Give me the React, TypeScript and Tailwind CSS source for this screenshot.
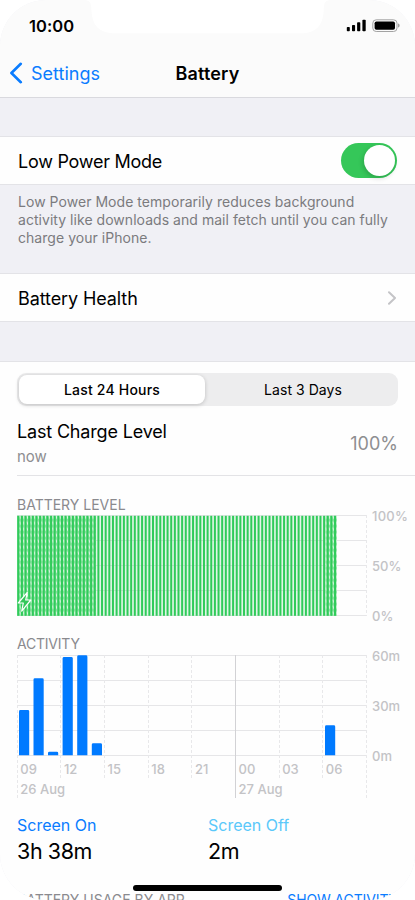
import React from "react"

const GRID_LINES = [0.5, 25.5, 50.5, 75.5, 100.5]
const SLOT = 349.5 / 96
const BATTERY_BARS = Array.from({ length: 88 }, (_, i) => i)

const ACTIVITY = [
  { x: 2, top: 55 },
  { x: 16.5, top: 23.3 },
  { x: 31, top: 96.7 },
  { x: 45.6, top: 2 },
  { x: 60.2, top: 0.3 },
  { x: 74.8, top: 88.3 },
  { x: 308, top: 70.3 },
]

const HOURS = ["09", "12", "15", "18", "21", "00", "03", "06"]

const StatusBar: React.FC = () => (
  <div className="relative flex h-[49px] items-start justify-between pt-[17px] pr-[15px] pl-[29px]">
    <svg
      className="absolute top-0 left-0"
      width="415"
      height="49"
      viewBox="0 0 415 49"
    >
      <path
        d="M84 0C89 0 91 2 91.3 8C91.8 25 98 33.3 116 33.3H300C317 33.3 323.6 25 323.8 8C324 2 326 0 331 0Z"
        fill="#fff"
      />
    </svg>
    <span className="text-[16.5px] leading-[18px] font-semibold tracking-[0.05px]">
      10:00
    </span>
    <svg
      className="mt-[2px]"
      width="54"
      height="14"
      viewBox="346 19 54 14"
    >
      <rect x="346.8" y="27" width="3" height="4.3" rx="0.8" />
      <rect x="352" y="25" width="3.1" height="6.3" rx="0.8" />
      <rect x="357.1" y="22.3" width="3.2" height="9" rx="0.8" />
      <rect x="362.4" y="19.7" width="3.3" height="11.6" rx="0.8" />
      <rect
        x="372.8"
        y="19.8"
        width="24.2"
        height="11.7"
        rx="3.4"
        fill="none"
        stroke="#a3a3a3"
      />
      <rect x="374.6" y="21.5" width="20.4" height="8.3" rx="1.8" />
      <path d="M398 23.6c1.2.4 1.6 1.1 1.6 2s-.4 1.6-1.6 2Z" fill="#a3a3a3" />
    </svg>
  </div>
)

const NavBar: React.FC = () => (
  <div className="relative flex h-[49px] items-center justify-center border-b border-[#d9d9de]">
    <a
      href="#"
      className="absolute top-0 left-[9px] flex h-[48px] items-center gap-[8px] text-[#0a7cff]"
    >
      <svg width="14" height="22" viewBox="0 0 14 22" fill="none">
        <path
          d="M11.8 1.8 2.4 11l9.4 9.2"
          stroke="currentColor"
          strokeWidth="2.6"
          strokeLinecap="round"
          strokeLinejoin="round"
        />
      </svg>
      <span className="text-[18px]">Settings</span>
    </a>
    <h1 className="text-[18px] font-semibold tracking-[0.15px]">Battery</h1>
  </div>
)

const BatteryChart: React.FC = () => (
  <svg
    className="block"
    width="398"
    height="112"
    viewBox="0 -6 398 112"
    fontSize="13"
    fontWeight="500"
  >
    <defs>
      <pattern
        id="hatch"
        width={SLOT}
        height="6"
        patternUnits="userSpaceOnUse"
      >
        <rect width="3.64" height="6" fill="#8ae2a0" />
        <path d="M2.4 0.5 3.7 3.7" stroke="#e2f8e7" strokeWidth="1.1" />
      </pattern>
    </defs>
    {GRID_LINES.map((y) => (
      <path key={y} d={`M0 ${y}H349.5`} stroke="#e6e6e8" />
    ))}
    <path d="M349.5 0V101" stroke="#e8e8ea" strokeDasharray="3 2" />
    <rect y="0.8" width="320" height="99.9" fill="#34c759" fillOpacity="0.14" />
    <rect y="0.8" width="79" height="99.9" fill="url(#hatch)" />
    <rect x="308.5" y="0.8" width="11.3" height="99.9" fill="url(#hatch)" />
    {BATTERY_BARS.map((i) => (
      <rect
        key={i}
        x={i * SLOT + 0.3}
        y="0.8"
        width="2"
        height="100"
        fill="#30cb5a"
      />
    ))}
    <path
      d="M10.3 77.3 1.3 88h5L4.7 96.2 13.8 85H8.7Z"
      fill="#34c759"
      stroke="#fff"
      strokeWidth="1.2"
      strokeLinejoin="round"
    />
    <g fill="#c3c3c6">
      <text x="355" y="5.7" letterSpacing="0.25">100%</text>
      <text x="355" y="55.7">50%</text>
      <text x="355" y="105.7">0%</text>
    </g>
  </svg>
)

const ActivityChart: React.FC = () => (
  <svg
    className="block"
    width="398"
    height="150"
    viewBox="0 -6 398 150"
    fontSize="13"
    fontWeight="500"
  >
    {GRID_LINES.map((y) => (
      <path key={y} d={`M0 ${y}H349.5`} stroke="#e6e6e8" />
    ))}
    {Array.from({ length: 9 }, (_, i) => (
      <path
        key={i}
        d={`M${Math.round(i * 43.65 - 0.2) + 0.5} 0V${i === 0 || i === 5 || i === 8 ? 143 : 124}`}
        stroke={i === 5 ? "#d2d2d5" : "#e8e8ea"}
        strokeDasharray={i === 5 ? undefined : "3 2"}
      />
    ))}
    {ACTIVITY.map(({ x, top }) => (
      <path
        key={x}
        d={`M${x} 100.2V${top + 1.4}q0-1.4 1.4-1.4h7.4q1.4 0 1.4 1.4V100.2Z`}
        fill="#007aff"
      />
    ))}
    <g fill="#c3c3c6">
      {HOURS.map((hour, i) => (
        <text key={hour} x={3.3 + i * 43.65} y="118.7">
          {hour}
        </text>
      ))}
      <text x="3.3" y="138.7">26 Aug</text>
      <text x="221.6" y="138.7">27 Aug</text>
      <text x="355" y="5.7">60m</text>
      <text x="355" y="55.7">30m</text>
      <text x="355" y="105.7">0m</text>
    </g>
  </svg>
)

const App: React.FC = () => {
  return (
    <div className="bg-white">
      <main className="relative flex h-[900px] w-[415px] flex-col overflow-hidden rounded-[46px] bg-[#f0f0f5] font-['Inter',sans-serif] whitespace-nowrap text-black">
        <header className="h-[98px] shrink-0 bg-[#fbfbfb]">
          <StatusBar />
          <NavBar />
        </header>

        <section className="mt-[38px] flex h-[49px] shrink-0 items-center justify-between border-y border-[#e3e3e7] bg-[#fefefe] pr-[18px] pl-[18px]">
          <span className="pt-[2px] text-[18px] tracking-[-0.26px]">
            Low Power Mode
          </span>
          <button
            aria-label="Low Power Mode"
            className="flex h-[35px] w-[56px] items-center justify-end rounded-full bg-[#35c759] pr-[2px]"
          >
            <span className="h-[31px] w-[31px] rounded-full bg-white shadow-[-1px_2px_5px_rgba(0,0,0,0.18)]" />
          </button>
        </section>
        <p className="mt-[8px] h-[80px] shrink-0 pl-[18px] text-[14px] leading-[18px] tracking-[0.04px] text-[#7b7b7e]">
          Low Power Mode temporarily reduces background
          <br />
          activity like downloads and mail fetch until you can fully
          <br />
          charge your iPhone.
        </p>

        <section className="flex h-[49px] shrink-0 items-center justify-between border-y border-[#e3e3e7] bg-[#fefefe] pr-[18px] pl-[18px]">
          <span className="pt-[2px] text-[18px] tracking-[-0.1px]">
            Battery Health
          </span>
          <svg width="10" height="14" viewBox="0 0 10 14" fill="none">
            <path
              d="m2 1.2 6 5.8-6 5.8"
              stroke="#c4c4c7"
              strokeWidth="2"
              strokeLinecap="round"
              strokeLinejoin="round"
            />
          </svg>
        </section>

        <section className="mt-[39px] h-[539px] shrink-0 border-t border-[#e3e3e7] bg-[#fefefe] pt-[11px] pl-[17px]">
          <div className="flex h-[33px] w-[381px] rounded-[9px] bg-[#ededee] p-[2px] text-[14px]">
            <button className="w-[186px] rounded-[8px] bg-white font-medium tracking-[0.2px] shadow-[0_1px_4px_rgba(0,0,0,0.2)]">
              Last 24 Hours
            </button>
            <button className="flex-1 pl-[5px] tracking-[0.05px]">
              Last 3 Days
            </button>
          </div>

          <div className="flex h-[70px] items-center justify-between border-b border-[#e3e3e6] pt-[8px] pr-[17px]">
            <div>
              <div className="text-[18px] leading-[24px] tracking-[-0.17px]">
                Last Charge Level
              </div>
              <div className="text-[15px] leading-[25px] text-[#8e8e91]">now</div>
            </div>
            <span className="pb-[2px] text-[18px] text-[#8e8e91]">100%</span>
          </div>

          <h2 className="mt-[20px] h-[13px] text-[14px] leading-[18px] text-[#8a8a8e]">
            BATTERY LEVEL
          </h2>
          <BatteryChart />
          <h2 className="mt-[14px] h-[14px] text-[14px] leading-[18px] tracking-[-0.22px] text-[#8a8a8e]">
            ACTIVITY
          </h2>
          <ActivityChart />

          <div className="mt-[14px] grid grid-cols-[191px_1fr]">
            <div>
              <div className="text-[16px] leading-[24px] text-[#0a7cff]">
                Screen On
              </div>
              <div className="text-[21.5px] leading-[28px] tracking-[-0.4px]">
                3h 38m
              </div>
            </div>
            <div>
              <div className="text-[16px] leading-[24px] text-[#5ac8fa]">
                Screen Off
              </div>
              <div className="text-[21.5px] leading-[28px] tracking-[-0.4px]">
                2m
              </div>
            </div>
          </div>

          <div className="mt-[26px] flex justify-between pr-[17px] text-[14px] leading-[18px]">
            <span className="text-[#8a8a8e]">BATTERY USAGE BY APP</span>
            <a href="#" className="tracking-[-0.12px] text-[#0a7cff]">
              SHOW ACTIVITY
            </a>
          </div>
        </section>

        <div className="absolute bottom-[9px] left-[133px] h-[6px] w-[149px] rounded-full bg-black" />
      </main>
    </div>
  )
}

export default App
